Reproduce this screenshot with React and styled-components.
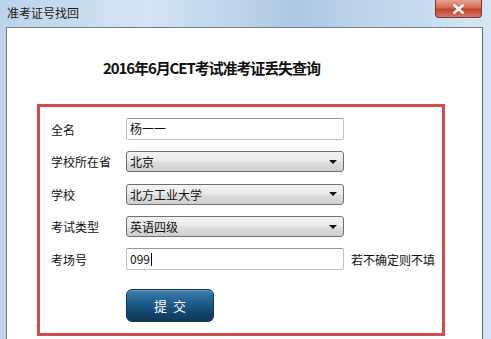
import React from "react"
import styled, { createGlobalStyle } from "styled-components"

const GlobalStyle = createGlobalStyle`
	html, body {
		margin: 0;
		padding: 0;
		width: 491px;
		height: 339px;
		overflow: hidden;
		font-family: "Microsoft YaHei", "Noto Sans CJK SC", sans-serif;
	}
`

const Window = styled.div`
	width: 491px;
	height: 339px;
	display: flex;
	flex-direction: column;
	background: linear-gradient(90deg, #bcd3ea 0%, #d4e4f3 30%, #afc9e4 60%, #c6dbef 85%, #d7e6f4 100%);
	box-sizing: border-box;
`

const TitleBar = styled.div`
	height: 27px;
	flex: none;
	display: flex;
	align-items: flex-start;
	justify-content: space-between;
	padding: 0 9px 0 7px;
`

const Caption = styled.div`
	font-size: 12px;
	line-height: 12px;
	margin-top: 7px;
	color: #1a1a1a;
`

const CloseButton = styled.div`
	width: 47px;
	height: 18px;
	border: 1px solid #7a3a33;
	border-top: none;
	border-radius: 0 0 4px 4px;
	background: linear-gradient(180deg, #e8a493 0%, #d46a55 45%, #c0402c 55%, #d4776a 100%);
	display: flex;
	align-items: center;
	justify-content: center;
	box-sizing: border-box;
`

const Client = styled.div`
	flex: 1;
	margin: 0 8px 0 6px;
	background: #fff;
	border: 1px solid #6d7f96;
	border-right-color: #55677e;
	border-bottom: none;
	padding: 30px 0 0 30px;
	box-sizing: border-box;
`

const Heading = styled.h1`
	margin: 0 0 26px 66px;
	font-size: 15px;
	line-height: 20px;
	font-weight: bold;
	color: #111;
	letter-spacing: -1.1px;
`

const FormBox = styled.div`
	width: 408px;
	height: 232px;
	border: 3px solid #d14d4d;
	box-sizing: border-box;
	padding: 11px 0 0 11px;
	display: flex;
	flex-direction: column;
`

const Row = styled.div`
	display: flex;
	align-items: center;
	height: 22px;
	flex: none;
	margin-bottom: ${(p) => p.$gap}px;
`

const Label = styled.div`
	width: 75px;
	font-size: 12px;
	color: #111;
`

const TextBox = styled.div`
	width: 218px;
	height: 22px;
	box-sizing: border-box;
	border: 1px solid #b8c4d0;
	border-top-color: #8e9aa8;
	border-radius: 2px;
	font-size: 12px;
	line-height: 20px;
	padding-left: 3px;
	color: #111;
	display: flex;
	align-items: center;
`

const Caret = styled.span`
	display: inline-block;
	width: 1px;
	height: 13px;
	background: #000;
	margin-left: 1px;
`

const Select = styled.div`
	width: 218px;
	height: 21px;
	box-sizing: border-box;
	border: 1px solid #707070;
	border-radius: 3px;
	background: linear-gradient(180deg, #f3f3f3 0%, #ebebeb 45%, #dddddd 55%, #cfcfcf 100%);
	font-size: 12px;
	padding: 0 6px 0 3px;
	color: #111;
	display: flex;
	align-items: center;
	justify-content: space-between;
`

const Arrow = styled.span`
	width: 0;
	height: 0;
	border-left: 4px solid transparent;
	border-right: 4px solid transparent;
	border-top: 4px solid #111;
`

const Hint = styled.span`
	font-size: 12px;
	margin-left: 7px;
	color: #111;
`

const SubmitButton = styled.button`
	margin-left: 75px;
	width: 88px;
	height: 33px;
	flex: none;
	border: 1px solid #0d3550;
	border-radius: 6px;
	background: linear-gradient(180deg, #3f7fae 0%, #1f5f8e 40%, #15486f 70%, #0f3655 100%);
	color: #fff;
	font-family: inherit;
	font-size: 13px;
	letter-spacing: 6px;
	padding: 0 0 0 6px;
	box-shadow: inset 0 1px 0 rgba(255, 255, 255, 0.25);
`

const selects = [
	{ label: "学校所在省", value: "北京" },
	{ label: "学校", value: "北方工业大学" },
	{ label: "考试类型", value: "英语四级" },
]

export default function App() {
	return (
		<>
			<GlobalStyle />
			<Window>
				<TitleBar>
					<Caption>准考证号找回</Caption>
					<CloseButton>
						<svg width="13" height="10" viewBox="0 0 13 10">
							<path
								d="M2.5 1.5 L10.5 8.5 M10.5 1.5 L2.5 8.5"
								stroke="#fff"
								strokeWidth="2.6"
								strokeLinecap="square"
							/>
						</svg>
					</CloseButton>
				</TitleBar>
				<Client>
					<Heading>2016年6月CET考试准考证丢失查询</Heading>
					<FormBox>
						<Row $gap={10.5}>
							<Label>全名</Label>
							<TextBox>杨一一</TextBox>
						</Row>
						{selects.map((s) => (
							<Row key={s.label} $gap={10.5}>
								<Label>{s.label}</Label>
								<Select>
									{s.value}
									<Arrow />
								</Select>
							</Row>
						))}
						<Row $gap={19}>
							<Label>考场号</Label>
							<TextBox>
								099
								<Caret />
							</TextBox>
							<Hint>若不确定则不填</Hint>
						</Row>
						<SubmitButton>提交</SubmitButton>
					</FormBox>
				</Client>
			</Window>
		</>
	)
}
